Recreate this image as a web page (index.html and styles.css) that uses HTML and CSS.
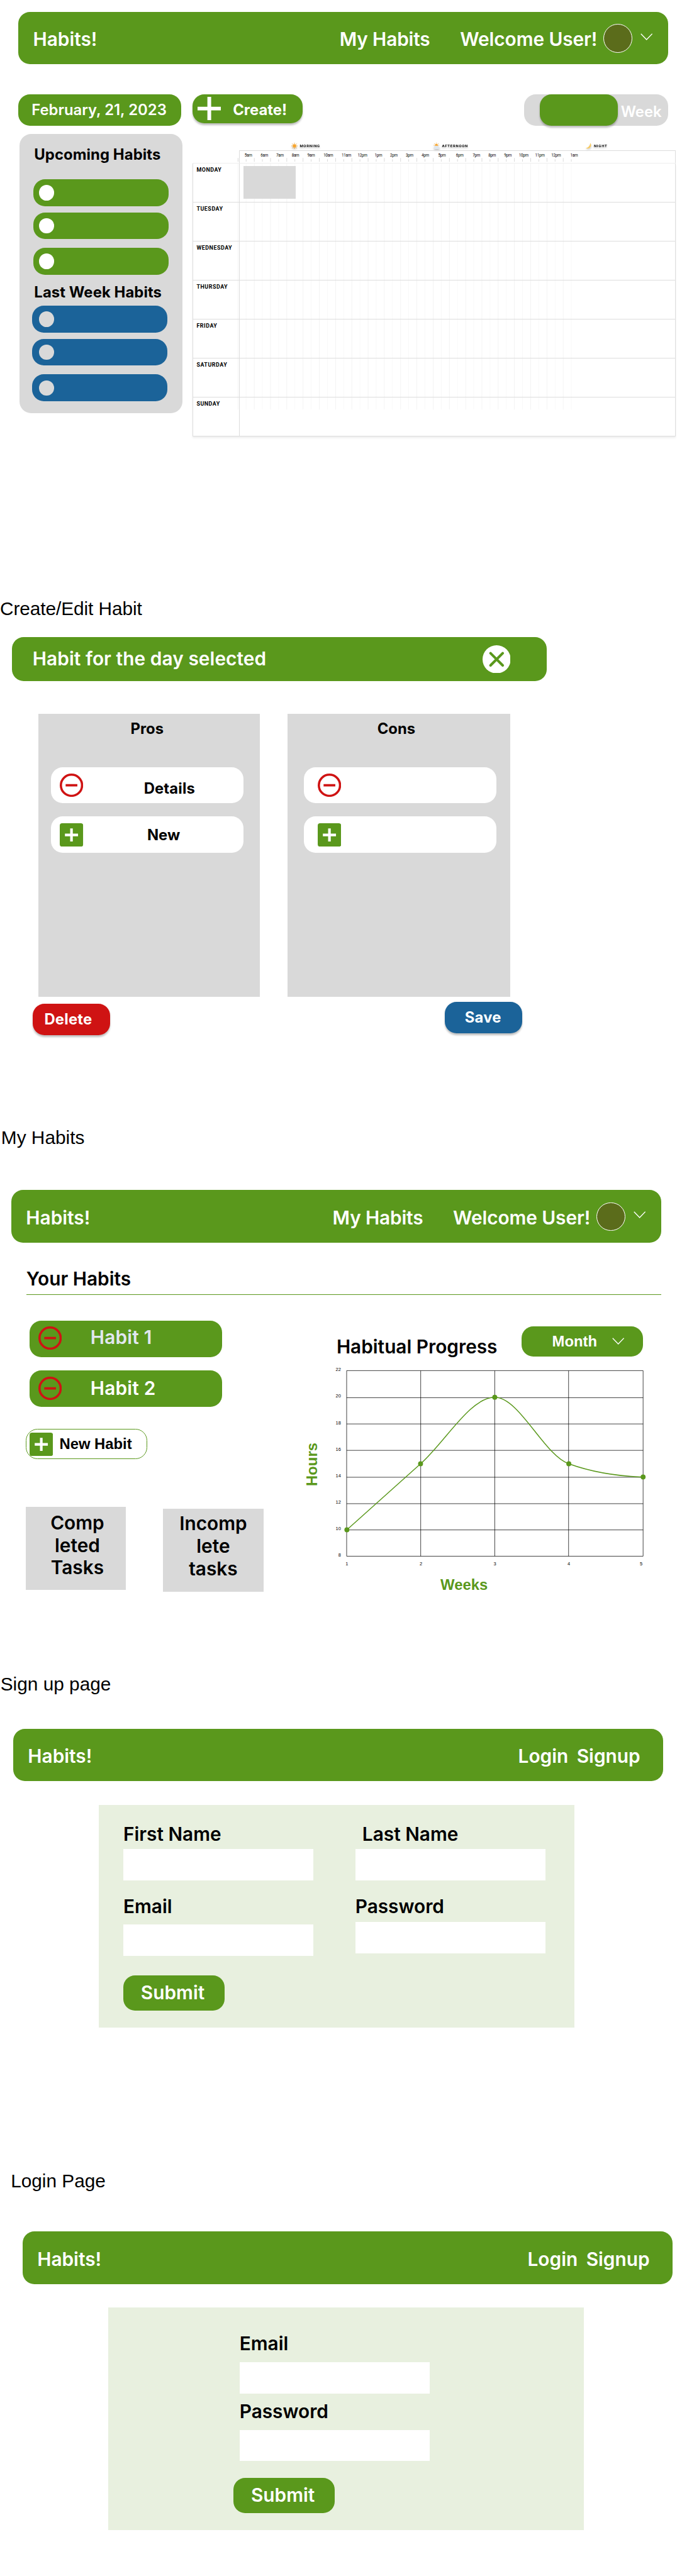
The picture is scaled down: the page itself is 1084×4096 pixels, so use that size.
FILE: index.html
```html
<!DOCTYPE html>
<html lang="en">
<head>
<meta charset="utf-8">
<title>Habits!</title>
<link rel="stylesheet" href="styles.css">
</head>
<body>
<svg class="defs" aria-hidden="true">
  <symbol id="chevron" viewBox="0 0 26 15"><path d="M1 1l12 12.500L25 1" fill="none" stroke="#fff" stroke-width="1.800"/></symbol>
  <symbol id="minus" viewBox="0 0 50 50"><circle cx="25" cy="25" r="22.600" fill="none" stroke="#cf1313" stroke-width="4.800"/><path d="M12.500 25h25" stroke="#cf1313" stroke-width="5"/></symbol>
  <symbol id="plus" viewBox="0 0 50 50"><rect width="50" height="50" rx="5" fill="#5a981c"/><path d="M11 25h28M25 11v28" stroke="#fff" stroke-width="5.600"/></symbol>
</svg>

<section class="page planner-page">
  <header class="bar">
    <span class="brand">Habits!</span>
    <a class="nav-habits">My Habits</a>
    <a class="nav-user">Welcome User!</a>
    <span class="avatar"></span>
    <svg class="chevron"><use href="#chevron"/></svg>
  </header>
  <div class="planner">
    <aside class="planner-side">
      <div class="date">February, 21, 2023</div>
      <div class="habit-lists">
        <h3>Upcoming Habits</h3>
        <div class="pills upcoming"><i></i><i></i><i></i></div>
        <h3 class="last">Last Week Habits</h3>
        <div class="pills past"><i></i><i></i><i></i></div>
      </div>
    </aside>
    <main class="planner-main">
      <div class="toolbar">
        <button class="create"><svg viewBox="0 0 50 50"><path d="M0 25h50M25 0v50" stroke="#fff" stroke-width="8"/></svg>Create!</button>
        <div class="toggle"><span class="knob"></span><span class="week">Week</span></div>
      </div>
      <div class="periods">
        <span><svg viewBox="0 0 14 14"><circle cx="7" cy="7" r="3.900" fill="#f9a52b"/><path d="M7 0v2.200M7 11.800V14M0 7h2.200M11.800 7H14M2 2l1.600 1.600M10.400 10.400L12 12M12 2l-1.600 1.600M3.600 10.400L2 12" stroke="#f9a52b" stroke-width="1.300"/></svg>MORNING</span>
        <span><svg viewBox="0 0 14 14"><circle cx="6.500" cy="5.500" r="3.200" fill="#f9a52b"/><path d="M6.500 0v1.500M.5 5.500H2M11 5.500h1.500M2 1.500l1.200 1.200M11 1.500L9.800 2.700" stroke="#f9a52b" stroke-width="1.200"/><path d="M3 14a2.800 2.800 0 0 1 0-5.500 3 3 0 0 1 5-1.200 3 3 0 0 1 4 2A2.400 2.400 0 0 1 11.500 14z" fill="#dfe7ee"/></svg>AFTERNOON</span>
        <span><svg viewBox="0 0 14 14"><path d="M11.500.5c5 6.500-1.500 15.500-11 11.500C6.500 12.500 11 7 11.500.5z" fill="#f8c95c"/></svg>NIGHT</span>
      </div>
      <div class="calendar">
        <svg class="lines" viewBox="0 0 720 611">
          <path d="M2.500 291h695" stroke="#f2f2f2" stroke-width="525" stroke-dasharray="1.200 33.490"/>
          <path d="M19.800 291h695" stroke="#f8f8f8" stroke-width="525" stroke-dasharray="1.200 33.490"/>
          <path d="M2.500 20.500h695" stroke="#d4d4d4" stroke-width="8" stroke-dasharray="1.200 33.490"/>
          <path d="M19.800 21.500h695" stroke="#d4d4d4" stroke-width="5" stroke-dasharray="1.200 33.490"/>
        </svg>
        <div class="hours"><span>5am</span><span>6am</span><span>7am</span><span>8am</span><span>9am</span><span>10am</span><span>11am</span><span>12pm</span><span>1pm</span><span>2pm</span><span>3pm</span><span>4pm</span><span>5pm</span><span>6pm</span><span>7pm</span><span>8pm</span><span>9pm</span><span>10pm</span><span>11pm</span><span>12pm</span><span>1am</span></div>
        <div class="days">
          <div class="day"><b>MONDAY</b><div class="slots"><i class="event"></i></div></div>
          <div class="day"><b>TUESDAY</b><div class="slots"></div></div>
          <div class="day"><b>WEDNESDAY</b><div class="slots"></div></div>
          <div class="day"><b>THURSDAY</b><div class="slots"></div></div>
          <div class="day"><b>FRIDAY</b><div class="slots"></div></div>
          <div class="day"><b>SATURDAY</b><div class="slots"></div></div>
          <div class="day"><b>SUNDAY</b><div class="slots"></div></div>
        </div>
      </div>
    </main>
  </div>
</section>

<section class="page edit-page">
  <h2>Create/Edit Habit</h2>
  <header class="edit-bar">
    <span>Habit for the day selected</span>
    <svg viewBox="0 0 60 60"><circle cx="30" cy="30" r="30" fill="#fff"/><path d="M17 17l26 26M43 17L17 43" stroke="#5a981c" stroke-width="5.500" stroke-linecap="round"/></svg>
  </header>
  <div class="panels">
    <div class="panel pros">
      <h3>Pros</h3>
      <div class="entry"><svg><use href="#minus"/></svg><span class="details">Details</span></div>
      <div class="entry"><svg><use href="#plus"/></svg><span class="new">New</span></div>
    </div>
    <div class="panel cons">
      <h3>Cons</h3>
      <div class="entry"><svg><use href="#minus"/></svg></div>
      <div class="entry"><svg><use href="#plus"/></svg></div>
    </div>
  </div>
  <div class="actions">
    <button class="delete">Delete</button>
    <button class="save">Save</button>
  </div>
</section>

<section class="page habits-page">
  <h2>My Habits</h2>
  <header class="bar">
    <span class="brand">Habits!</span>
    <a class="nav-habits">My Habits</a>
    <a class="nav-user">Welcome User!</a>
    <span class="avatar"></span>
    <svg class="chevron"><use href="#chevron"/></svg>
  </header>
  <h1>Your Habits</h1>
  <div class="dashboard">
    <div class="habits">
      <div class="habit muted"><svg><use href="#minus"/></svg>Habit 1</div>
      <div class="habit second"><svg><use href="#minus"/></svg>Habit 2</div>
      <button class="new-habit"><svg><use href="#plus"/></svg>New Habit</button>
      <div class="tasks">
        <div class="task">Comp<br>leted<br>Tasks</div>
        <div class="task incomplete">Incomp<br>lete<br>tasks</div>
      </div>
    </div>
    <div class="progress">
      <div class="progress-head">
        <h3>Habitual Progress</h3>
        <button class="month">Month<svg class="chevron"><use href="#chevron"/></svg></button>
      </div>
      <svg class="chart" viewBox="640 2910 760 500">
        <path d="M739.300 2926.600H1371.800M739.300 2984.400H1371.800M739.300 3040.400H1371.800M739.300 3096.800H1371.800M739.300 3154.200H1371.800M739.300 3210.600H1371.800M739.300 3266.600H1371.800M739.300 3322.700H1371.800M739.300 2926.600V3322.700M897.300 2926.600V3322.700M1055.300 2926.600V3322.700M1212.800 2926.600V3322.700M1371.800 2926.600V3322.700" stroke="#000" stroke-width="1" fill="none"/>
        <path d="M739.800 3266.400L897 3125.500C950 3078.500 1002.600 2983.500 1055.300 2983.500S1160 3106.600 1213.300 3125.500C1265.500 3144.500 1319 3152 1371.800 3153.700" fill="none" stroke="#5a981c" stroke-width="2"/>
        <g fill="#5a981c"><circle cx="739.800" cy="3266.400" r="5.300"/><circle cx="897" cy="3125.500" r="5.300"/><circle cx="1055.300" cy="2983.500" r="5.300"/><circle cx="1213.300" cy="3125.500" r="5.300"/><circle cx="1371.800" cy="3153.700" r="5.300"/></g>
        <g class="ticks" text-anchor="end"><text x="727" y="2928">22</text><text x="727" y="2984.500">20</text><text x="727" y="3042">18</text><text x="727" y="3098">16</text><text x="727" y="3154.500">14</text><text x="727" y="3211">12</text><text x="727" y="3267">10</text><text x="727" y="3323">8</text></g>
        <g class="ticks" text-anchor="middle"><text x="739.800" y="3342.500">1</text><text x="897.800" y="3342.500">2</text><text x="1055.500" y="3342.500">3</text><text x="1213.300" y="3342.500">4</text><text x="1367.800" y="3342.500">5</text></g>
        <text class="axis" transform="translate(676 3173) rotate(-90)">Hours</text>
        <text class="axis" x="939.500" y="3394">Weeks</text>
      </svg>
    </div>
  </div>
</section>

<section class="page signup-page">
  <h2>Sign up page</h2>
  <header class="bar guest">
    <span class="brand">Habits!</span>
    <a class="nav-login">Login</a>
    <a class="nav-signup">Signup</a>
  </header>
  <form class="signup">
    <label class="first">First Name<input></label>
    <label class="last-name">Last Name<input></label>
    <label class="email">Email<input></label>
    <label class="password">Password<input></label>
    <button type="button" class="submit">Submit</button>
  </form>
</section>

<section class="page login-page">
  <h2>Login Page</h2>
  <header class="bar guest">
    <span class="brand">Habits!</span>
    <a class="nav-login">Login</a>
    <a class="nav-signup">Signup</a>
  </header>
  <form class="login">
    <label class="email">Email<input></label>
    <label class="password">Password<input></label>
    <button type="button" class="submit">Submit</button>
  </form>
</section>
</body>
</html>
```

FILE: styles.css
```css
:root {
  --green: #5a981c;
  --gray: #d9d9d9;
  --blue: #1b6399;
  --red: #cf1313;
  --pale: #e8f0df;
}

* { box-sizing: border-box; }

html { font-size: 7.45px; }

body {
  margin: 0;
  width: 145.5rem;
  background: #fff;
  color: #000;
  font: 600 4rem/4.8rem Inter, "Liberation Sans", sans-serif;
}

svg { display: block; flex: none; }
.defs { position: absolute; width: 0; height: 0; }
h1, h2, h3 { margin: 0; font: inherit; }
h2 { font: 400 4rem/4.8rem "Liberation Sans", Arial, sans-serif; white-space: nowrap; }
h3 { font-size: 3.2rem; font-weight: 700; line-height: 4rem; white-space: nowrap; }
button { margin: 0; padding: 0; border: 0; color: #fff; font: inherit; white-space: nowrap; }
input { display: block; width: 40.6rem; height: 6.7rem; padding: 0; border: 0; background: #fff; }
label { display: block; white-space: nowrap; }

.page { overflow: hidden; }
.planner-page { height: 127.5rem; padding-top: 2.5rem; }
.edit-page { height: 112.95rem; }
.habits-page { height: 116.6rem; }
.signup-page { height: 106.1rem; }
.login-page { height: 86.6rem; }
.edit-page h2 { letter-spacing: -.01rem; }
.habits-page h2 { padding-left: .25rem; }
.signup-page h2 { padding-left: .1rem; }
.login-page h2 { padding-left: 2.3rem; }

/* Top bar */
.bar {
  display: flex;
  width: 138.7rem;
  height: 11.2rem;
  padding: 3.55rem 3.4rem 0 3.15rem;
  border-radius: 2.5rem;
  background: var(--green);
  color: #fff;
  white-space: nowrap;
}
.brand { margin-right: auto; }
.nav-habits { width: 25.7rem; letter-spacing: -.02rem; }
.nav-user { width: 30.6rem; letter-spacing: -.01rem; }
.avatar {
  width: 6.15rem;
  height: 6.15rem;
  margin-top: -.95rem;
  border: 1px solid #fff;
  border-radius: 50%;
  background: #5b6c1b;
}
.chevron { width: 2.6rem; height: 1.5rem; }
.bar .chevron { margin: 1rem 0 0 1.7rem; }
.planner-page .bar { margin-left: 3.9rem; }
.nav-login { width: 12.5rem; }
.nav-signup { width: 15.05rem; }

/* Planner */
.planner { display: flex; margin: 6.5rem 0 0 3.9rem; }
.planner-side { width: 37.2rem; }
.date {
  width: 34.8rem;
  height: 6.7rem;
  padding: 1.3rem 0 0 2.85rem;
  border-radius: 2.5rem;
  background: var(--green);
  color: #fff;
  font-size: 3.2rem;
  line-height: 4rem;
  white-space: nowrap;
}
.habit-lists {
  width: 34.8rem;
  height: 59.6rem;
  margin: 1.7rem 0 0 .2rem;
  padding: 2.44rem 0 0 3.2rem;
  border-radius: 2.5rem;
  background: var(--gray);
}
.habit-lists h3 { letter-spacing: .01rem; }
.habit-lists .last { margin-top: 1.77rem; }
.pills { width: 28.9rem; }
.pills i {
  display: flex;
  align-items: center;
  height: 5.73rem;
  padding-left: 1.2rem;
  border-radius: 2.5rem;
  background: var(--green);
}
.pills i::before { content: ""; width: 3.2rem; height: 3.3rem; border-radius: 50%; background: #fff; }
.pills i + i { margin-top: 1.3rem; }
.pills i + i + i { margin-top: 1.88rem; }
.upcoming { margin: 3.26rem 0 0 -.2rem; }
.past { margin: .86rem 0 0 -.5rem; }
.past i { padding-left: 1.5rem; background: var(--blue); }
.past i::before { background: var(--gray); }

.planner-main { width: 103.1rem; }
.toolbar { display: flex; justify-content: space-between; height: 6.7rem; padding-right: 1.6rem; font-size: 3.2rem; }
.create {
  display: flex;
  gap: 2.6rem;
  width: 23.5rem;
  height: 6.1rem;
  padding: .5rem 0 0 1rem;
  border-radius: 2.5rem;
  background: var(--green);
  box-shadow: 0 .4rem .4rem rgba(0, 0, 0, .25);
  font-size: 3.2rem;
  font-weight: 700;
  line-height: 5.65rem;
}
.create svg { width: 5rem; height: 5rem; }
.toggle { display: flex; width: 30.8rem; height: 6.7rem; padding-left: 3.35rem; border-radius: 2.5rem; background: var(--gray); color: #fff; }
.knob { width: 16.65rem; border-radius: 2.5rem; background: var(--green); box-shadow: 0 .4rem .4rem rgba(0, 0, 0, .25); }
.week { margin: 1.25rem 0 0 .65rem; }

.periods {
  display: grid;
  grid-template-columns: 30.36rem 32.4rem 1fr;
  align-items: end;
  height: 5.13rem;
  padding: 0 0 .2rem 21rem;
  font: 700 .8rem/1.3rem Roboto, sans-serif;
  letter-spacing: .1rem;
}
.periods span { display: flex; gap: .5rem; filter: drop-shadow(0 .3rem .2rem rgba(0, 0, 0, .25)); }
.periods svg { width: 1.35rem; height: 1.35rem; margin-top: -.05rem; }

.calendar { position: relative; }
.lines { position: absolute; z-index: -1; left: 9.4rem; top: 0; width: 72rem; height: 61.1rem; }
.hours {
  display: grid;
  grid-template-columns: 3.43rem 3.33rem 3.3rem 3.35rem 3.45rem 3.85rem 3.43rem 3.62rem 3.3rem 3.35rem 3.35rem 3.57rem 3.77rem 3.56rem 3.36rem 3.38rem 3.14rem 3.46rem 3.46rem 4.06rem 3rem;
  height: 2.8rem;
  margin-left: 9.9rem;
  padding: .5rem 0 0 1.05rem;
  border: solid #ddd;
  border-width: 1px 1px 0;
  font: 400 .85rem/1.1rem Roboto, sans-serif;
  letter-spacing: -.04rem;
}
.days { border: solid #ddd; border-width: 0 1px 1px; box-shadow: 0 .4rem .4rem rgba(0, 0, 0, .07); clip-path: inset(0 -1rem -1rem -1rem); }
.day { display: flex; height: 8.32rem; border-top: 1px solid #ddd; }
.day b { width: 9.85rem; padding: .58rem 0 0 .7rem; border-right: 1px solid #ddd; font: 700 1.2rem/1.4rem Roboto, sans-serif; letter-spacing: .07rem; }
.slots { padding: .5rem 0 0 .9rem; }
.event { display: block; width: 11.1rem; height: 6.9rem; background: var(--gray); }

/* Create / edit */
.edit-bar {
  display: flex;
  justify-content: space-between;
  width: 114.2rem;
  height: 9.37rem;
  margin: 3.7rem 0 0 2.5rem;
  padding: 2.25rem 7.8rem 0 4.45rem;
  border-radius: 2.5rem;
  background: var(--green);
  color: #fff;
  letter-spacing: .01rem;
}
.edit-bar svg { width: 6rem; height: 6rem; margin-top: -.57rem; }
.panels { display: flex; gap: 6rem; margin: 6.93rem 0 0 8.2rem; }
.panel { width: 47.2rem; height: 60.4rem; padding: 1.25rem 0 0 2.7rem; background: var(--gray); }
.panel h3 { margin-bottom: 6.15rem; padding-left: 16.95rem; }
.cons { width: 47.5rem; padding-left: 3.4rem; }
.cons h3 { padding-left: 15.7rem; }
.entry { display: flex; width: 41.1rem; height: 7.77rem; padding: 1.45rem 0 0 1.9rem; border-radius: 2.5rem; background: #fff; font-size: 3.2rem; font-weight: 700; line-height: 4rem; }
.entry + .entry { margin-top: 2.73rem; }
.cons .entry { padding-left: 3rem; }
.entry svg { width: 5rem; height: 5rem; }
.details { margin: 1.15rem 0 0 12.9rem; letter-spacing: .02rem; }
.new { margin: .6rem 0 0 13.6rem; }
.actions { display: flex; justify-content: space-between; width: 104.5rem; margin: 1.1rem 0 0 6.95rem; }
.actions button { width: 16.6rem; height: 6.7rem; border-radius: 2.5rem; box-shadow: 0 .4rem .4rem rgba(0, 0, 0, .25); font-size: 3.2rem; font-weight: 700; line-height: 4rem; letter-spacing: .03rem; text-align: left; }
.delete { margin-top: .4rem; padding-left: 2.5rem; background: var(--red); }
.save { padding-left: 4.3rem; background: var(--blue); }

/* My habits */
.habits-page .bar { margin: 8.75rem 0 0 2.4rem; }
h1 { width: 135.5rem; margin: 5.35rem 0 0 5.6rem; padding-bottom: .95rem; border-bottom: .2rem solid var(--green); }
.dashboard { display: flex; padding: 5.4rem 0 0 5.5rem; }
.habits { width: 58.5rem; }
.habit { display: flex; width: 41.1rem; height: 7.8rem; margin: 0 0 2.8rem .8rem; padding: 1.3rem 0 0 1.9rem; border-radius: 2.5rem; background: var(--green); color: #fff; letter-spacing: .03rem; }
.habit svg { width: 5rem; height: 5rem; margin: -.1rem 6.1rem 0 0; }
.second { padding-top: 1.53rem; }
.muted { color: #e1e7ef; }
.new-habit { display: flex; gap: 1.35rem; width: 25.9rem; height: 6.5rem; margin-top: 4.7rem; padding: .7rem 0 0 .7rem; border: 1px solid var(--green); border-radius: 2.5rem; background: none; color: #000; font: 700 3.2rem/4.8rem "Liberation Sans", Arial, sans-serif; }
.new-habit svg { width: 5rem; height: 5rem; }
.tasks { display: flex; gap: 7.9rem; margin-top: 10.25rem; }
.task { width: 21.4rem; height: 17.7rem; padding: 1rem 0 0 .6rem; background: var(--gray); text-align: center; }
.incomplete { margin-top: .3rem; padding: .85rem 0 0; }
.progress { width: 76rem; }
.progress-head { display: flex; height: 9.1rem; padding: 1.2rem 2.8rem 0 7.8rem; justify-content: space-between; }
.progress-head h3 { margin-top: 2.1rem; font-size: 4rem; font-weight: 600; line-height: 4.8rem; }
.month { display: flex; gap: 3.2rem; width: 25.9rem; height: 6.5rem; padding: 1.3rem 0 0 6.5rem; border-radius: 2.5rem; background: var(--green); font: 700 3.2rem/4rem "Liberation Sans", Arial, sans-serif; }
.month .chevron { margin-top: 1.15rem; }
.chart { width: 76rem; height: 50rem; }
.ticks { font: 400 10px "Liberation Sans", Arial, sans-serif; }
.axis { fill: var(--green); font: 700 32px "Liberation Sans", Arial, sans-serif; }

/* Sign up and login */
.signup-page .bar { margin: 7.15rem 0 0 2.8rem; }
.login-page .bar { margin: 8.35rem 0 0 4.8rem; }
form { width: 101.4rem; height: 47.5rem; background: var(--pale); }
.signup { display: grid; grid-template-columns: 49.5rem 1fr; grid-template-rows: 15.53rem 17.3rem auto; margin: 5rem 0 0 21.1rem; padding: 3.87rem 0 0 5.2rem; }
.signup input { margin-top: .73rem; }
.last-name { text-indent: 1.5rem; }
.signup .email input { margin-top: 1.4rem; }
.signup .password input { margin-top: .8rem; }
.submit { width: 21.6rem; height: 7.5rem; padding: 0 0 0 3.75rem; border-radius: 2.5rem; background: var(--green); text-align: left; }
.signup .submit { margin-top: -.3rem; }
.login { margin: 5rem 0 0 23.1rem; padding: 5.35rem 0 0 28rem; }
.login .email input { margin-top: 1.55rem; }
.login .password { margin-top: 1.5rem; }
.login .password input { margin-top: 1.4rem; }
.login .submit { margin: 3.6rem 0 0 -1.3rem; }
```
